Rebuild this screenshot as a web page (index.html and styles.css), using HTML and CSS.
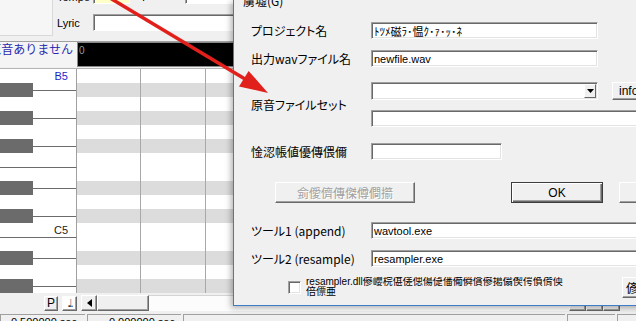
FILE: index.html
```html
<!DOCTYPE html>
<html lang="ja">
<head>
    <meta charset="UTF-8">
    <meta name="viewport" content="width=device-width, initial-scale=1.0">
    <title>UTAU - プロジェクトの設定</title>
    <link rel="stylesheet" href="styles.css">
</head>
<body>
    <div class="app">
        <div class="toolbar">
            <div class="tb-left"></div>
            <div class="tb-fields">
                <div class="tb-row tb-top">
                    <span class="tb-label">Tempo</span>
                    <span class="field yellow"></span>
                    <span class="tb-label small">:</span>
                    <span class="field short">1.0</span>
                </div>
                <div class="tb-row tb-lyric">
                    <span class="tb-label">Lyric</span>
                    <span class="field lyric"></span>
                </div>
            </div>
        </div>

        <div class="track-head">
            <div class="track-name"><span>原音ありません</span></div>
            <div class="track-bar">0</div>
        </div>

        <!-- ピアノロール -->
        <div class="roll">
            <div class="row w"><div class="key"><span class="kl blue">B5</span></div><div class="lane"></div></div>
            <div class="row b"><div class="key"><i class="bk"></i><i class="kline"></i></div><div class="lane"></div></div>
            <div class="row w"><div class="key"></div><div class="lane"></div></div>
            <div class="row b"><div class="key"><i class="bk"></i><i class="kline"></i></div><div class="lane"></div></div>
            <div class="row w"><div class="key"></div><div class="lane"></div></div>
            <div class="row b"><div class="key"><i class="bk"></i><i class="kline"></i></div><div class="lane"></div></div>
            <div class="row w"><div class="key"></div><div class="lane"></div></div>
            <div class="row w edge"><div class="key"></div><div class="lane"></div></div>
            <div class="row b"><div class="key"><i class="bk"></i><i class="kline"></i></div><div class="lane"></div></div>
            <div class="row w"><div class="key"></div><div class="lane"></div></div>
            <div class="row b"><div class="key"><i class="bk"></i><i class="kline"></i></div><div class="lane"></div></div>
            <div class="row w"><div class="key"><span class="kl">C5</span></div><div class="lane"></div></div>
            <div class="row w edge"><div class="key"></div><div class="lane"></div></div>
            <div class="row b"><div class="key"><i class="bk"></i><i class="kline"></i></div><div class="lane"></div></div>
            <div class="row w"><div class="key"></div><div class="lane"></div></div>
            <div class="row b"><div class="key"><i class="bk"></i><i class="kline"></i></div><div class="lane"></div></div>
        </div>

        <div class="scrollrow">
            <span class="sbtn">P</span>
            <span class="sbtn note">♩.</span>
            <div class="hscroll">
                <span class="sarrow">
                    <svg width="5" height="8" viewBox="0 0 5 8"><polygon points="5,0 0,4 5,8" fill="#000"/></svg>
                </span>
                <span class="thumb"></span>
                <span class="track"></span>
                <span class="mini"></span>
                <span class="mini"></span>
                <span class="mini"></span>
            </div>
        </div>

        <div class="status">
            <span class="sfield s1">0.500000 sec</span>
            <span class="sfield s2">0.000000 sec</span>
            <span class="sfield s3"></span>
            <span class="sfield s4"></span>
            <span class="sfield s5"></span>
        </div>
    </div>

    <!-- プロジェクト設定ダイアログ -->
    <div class="dialog">
        <div class="dlg-menu">虜墟(G)</div>

        <div class="frow r1">
            <span class="flabel">プロジェクト名</span>
            <input class="tbox w-mid" type="text" value="ﾄﾂﾒ磁ﾗ･愠ｸ･ｧ･ｯ･ﾈ">
        </div>
        <div class="frow r2">
            <span class="flabel">出力wavファイル名</span>
            <input class="tbox w-mid" type="text" value="newfile.wav">
        </div>
        <div class="frow r3">
            <span class="flabel">原音ファイルセット</span>
            <div class="fstack">
                <div class="combo-line">
                    <div class="combo">
                        <span class="combo-btn">
                            <svg width="7" height="4" viewBox="0 0 7 4"><polygon points="0,0 7,0 3.5,4" fill="#000"/></svg>
                        </span>
                    </div>
                    <button class="btn info">info</button>
                </div>
                <input class="tbox w-long" type="text" value="">
            </div>
        </div>
        <div class="frow r4">
            <span class="flabel">惍涊帳値優傳偎儞</span>
            <input class="tbox w-short" type="text" value="">
        </div>
        <div class="frow r5">
            <button class="btn wide" disabled>侴僾儕傳傑僔僴擶</button>
            <button class="btn ok">OK</button>
            <button class="btn cancel"></button>
        </div>
        <div class="frow r6">
            <span class="flabel">ツール1 (append)</span>
            <input class="tbox w-long" type="text" value="wavtool.exe">
        </div>
        <div class="frow r7">
            <span class="flabel">ツール2 (resample)</span>
            <input class="tbox w-long" type="text" value="resampler.exe">
        </div>
        <div class="frow r8">
            <span class="checkbox"></span>
            <span class="check-text">resampler.dll傪巊梡偡傞偲偒偼僠僃僢僋傪擖傟偰偔偩偝偄<br>倍僄亜</span>
            <button class="btn side">偐</button>
        </div>
    </div>

    <svg class="arrow" width="636" height="321" viewBox="0 0 636 321">
        <line x1="110" y1="-2" x2="245" y2="79" stroke="#e2201b" stroke-width="3.5"/>
        <polygon points="268,93 239,86.5 248.6,70.9" fill="#e2201b"/>
    </svg>
</body>
</html>
```

FILE: styles.css
```css
body {
    margin: 0;
    width: 636px;
    height: 321px;
    overflow: hidden;
    position: relative;
    background-color: #f0f0f0;
    font-family: "Liberation Sans", "Noto Sans CJK JP", sans-serif;
    font-size: 11px;
    color: #000;
}
.app {
    display: flex;
    flex-direction: column;
    height: 321px;
}

/* ツールバー */
.toolbar {
    height: 41px;
    border-bottom: 1px solid #a0a0a0;
    display: flex;
}
.tb-left {
    width: 52px;
    height: 35px;
    background-color: #f6f6f6;
    border-right: 1px solid #d9d9d9;
    border-bottom: 1px solid #d9d9d9;
}
.tb-fields {
    flex: 1;
    padding-left: 4px;
    display: flex;
    flex-direction: column;
}
.tb-row {
    display: flex;
    align-items: center;
    height: 17px;
}
.tb-top {
    margin-top: -13px;
    align-items: flex-end;
}
.tb-lyric {
    margin-top: 10px;
}
.tb-label {
    width: 36px;
    font-size: 11px;
}
.tb-top .tb-label {
    line-height: 14px;
}
.tb-label.small {
    width: 43px;
    padding-left: 12px;
}
.field {
    height: 17px;
    box-sizing: border-box;
    background-color: #fff;
    border: 1px solid;
    border-color: #a0a0a0 #fff #fff #a0a0a0;
    box-shadow: inset 1px 1px 0 #696969;
    font-size: 10px;
    text-align: right;
    padding-right: 3px;
}
.field.yellow {
    width: 37px;
    background-color: #ffffc8;
}
.field.short {
    width: 60px;
    text-align: left;
    padding-left: 38px;
}
.field.lyric {
    width: 220px;
}

/* トラックヘッダー */
.track-head {
    height: 25px;
    display: flex;
}
.track-name {
    width: 77px;
    flex-shrink: 0;
    display: flex;
    justify-content: flex-end;
    overflow: hidden;
    white-space: nowrap;
    background-color: #f4f4f4;
    padding-right: 4px;
    box-sizing: border-box;
    font-family: "Noto Sans CJK JP", sans-serif;
    font-size: 12px;
    line-height: 14px;
    color: #2a2ab0;
}
.track-bar {
    flex: 1;
    background-color: #000;
    border: 1px solid #8a8a8a;
    color: #9a9a9a;
    font-size: 10px;
    padding: 2px 0 0 1px;
}

/* ピアノロール */
.roll {
    height: 224px;
    margin-top: 1px;
    border-top: 1px solid #b4b4b4;
}
.row {
    display: flex;
    height: 14px;
}
.key {
    width: 77px;
    flex-shrink: 0;
    box-sizing: border-box;
    background-color: #fff;
    border-right: 1px solid #a0a0a0;
    display: flex;
    justify-content: flex-end;
    align-items: center;
}
.row.b .key {
    justify-content: flex-start;
    align-items: stretch;
}
.row.edge .key {
    border-top: 1px solid #6b6b6b;
}
.bk {
    width: 33px;
    background-color: #6b6b6b;
}
.kline {
    flex: 1;
    background: linear-gradient(#fff 0 7px, #6b6b6b 7px 8px, #fff 8px);
}
.kl {
    padding-right: 8px;
    font-size: 11px;
    color: #222;
}
.kl.blue {
    color: #1e1ec8;
}
.lane {
    flex: 1;
    background-color: #fff;
    background-image: linear-gradient(90deg, #a8a8a8 1px, transparent 1px);
    background-size: 65px 100%;
    background-position: 63px 0;
}
.row.b .lane {
    background-color: #dcdcdc;
}

/* スクロールバー */
.scrollrow {
    height: 20px;
    display: flex;
    align-items: center;
    padding-left: 44px;
}
.sbtn,
.sarrow,
.thumb,
.mini {
    box-sizing: border-box;
    flex-shrink: 0;
    background-color: #f0f0f0;
    border: 1px solid;
    border-color: #fff #696969 #696969 #fff;
    box-shadow: inset -1px -1px 0 #a0a0a0;
}
.sbtn {
    width: 14px;
    height: 15px;
    display: flex;
    align-items: center;
    justify-content: center;
    font-size: 12px;
}
.sbtn.note {
    width: 15px;
    margin-left: 4px;
    background-color: #fff;
    font-family: "DejaVu Sans", sans-serif;
    font-size: 11px;
    letter-spacing: -2px;
    color: #333;
}
.hscroll {
    flex: 1;
    margin-left: 4px;
    height: 16px;
    display: flex;
}
.sarrow {
    width: 16px;
    display: flex;
    align-items: center;
    justify-content: center;
}
.thumb {
    width: 52px;
}
.track {
    flex: 1;
    background-color: #fcfcfc;
    border-top: 1px solid #d4d4d4;
}
.mini {
    width: 17px;
}
.mini:last-child {
    margin-right: 16px;
}

/* ステータスバー */
.status {
    height: 8px;
    overflow: hidden;
    display: flex;
    gap: 2px;
    padding-top: 1px;
    box-sizing: border-box;
}
.sfield {
    height: 18px;
    box-sizing: border-box;
    border-top: 1px solid #a0a0a0;
    border-left: 1px solid #a0a0a0;
    text-align: right;
    font-size: 11px;
    line-height: 12px;
    padding-top: 1px;
}
.s1 {
    width: 85px;
    padding-right: 8px;
}
.s2 {
    width: 94px;
    padding-right: 6px;
}
.s3 {
    flex: 1;
}
.s4 {
    width: 48px;
}
.s5 {
    width: 19px;
}

/* ダイアログ */
.dialog {
    position: absolute;
    left: 233px;
    top: 0;
    width: 500px;
    height: 305px;
    padding-left: 17px;
    background-color: #f0f0f0;
    border-left: 1px solid #3d7cc9;
    border-bottom: 1px solid #3d7cc9;
    box-shadow: -2px 2px 6px rgba(0, 0, 0, 0.3);
}
.dlg-menu {
    height: 16px;
    margin-top: -6px;
    margin-bottom: 2px;
    margin-left: -8px;
    font-family: "Noto Sans CJK JP", sans-serif;
    font-size: 12px;
    line-height: 14px;
}
.frow {
    display: flex;
    align-items: center;
}
.frow > * {
    flex-shrink: 0;
}
.r1 { margin-top: 12px; }
.r2 { margin-top: 11px; }
.r3 { margin-top: 15px; }
.r4 { margin-top: 16px; }
.r5 { margin-top: 22px; }
.r6 { margin-top: 19px; }
.r7 { margin-top: 11px; }
.r8 { margin-top: 9px; height: 22px; }
.flabel {
    width: 120px;
    font-family: "Noto Sans CJK JP", sans-serif;
    font-size: 12px;
    line-height: 14px;
    font-feature-settings: "palt";
}
.tbox {
    height: 17px;
    box-sizing: border-box;
    margin: 0;
    padding: 0 0 0 2px;
    border: 1px solid;
    border-color: #a0a0a0 #fff #fff #a0a0a0;
    box-shadow: inset 1px 1px 0 #696969, inset -1px -1px 0 #e3e3e3;
    background-color: #fff;
    font-family: "Liberation Sans", "Noto Sans CJK JP", sans-serif;
    font-size: 11px;
    color: #000;
    outline: none;
}
.w-mid { width: 227px; }
.w-long { width: 290px; }
.w-short { width: 131px; }
.fstack {
    display: flex;
    flex-direction: column;
    gap: 10px;
}
.combo-line {
    display: flex;
    align-items: center;
    height: 18px;
}
.combo {
    width: 227px;
    height: 18px;
    flex-shrink: 0;
    box-sizing: border-box;
    border: 1px solid;
    border-color: #a0a0a0 #fff #fff #a0a0a0;
    box-shadow: inset 1px 1px 0 #696969, inset -1px -1px 0 #e3e3e3;
    background-color: #fff;
    display: flex;
    justify-content: flex-end;
    align-items: center;
    padding-right: 1px;
}
.combo-btn {
    width: 12px;
    height: 14px;
    box-sizing: border-box;
    background-color: #f0f0f0;
    border: 1px solid;
    border-color: #fff #696969 #696969 #fff;
    display: flex;
    align-items: center;
    justify-content: center;
}
.btn {
    box-sizing: border-box;
    flex-shrink: 0;
    margin: 0;
    padding: 0;
    background-color: #f0f0f0;
    border: 1px solid;
    border-color: #fff #696969 #696969 #fff;
    box-shadow: inset -1px -1px 0 #a0a0a0;
    font-family: "Liberation Sans", "Noto Sans CJK JP", sans-serif;
    font-size: 12px;
    color: #000;
}
.info {
    width: 40px;
    height: 18px;
    margin-left: 14px;
    text-align: left;
    padding-left: 6px;
}
.wide {
    width: 140px;
    height: 21px;
    margin-left: 24px;
    color: #a0a0a0;
    text-shadow: 1px 1px 0 #fff;
    font-size: 12px;
}
.ok {
    width: 92px;
    height: 21px;
    margin-left: 96px;
    border: 1px solid #3c3c3c;
    box-shadow: inset 1px 1px 0 #fff, inset -1px -1px 0 #696969, inset -2px -2px 0 #a0a0a0;
}
.cancel {
    width: 92px;
    height: 21px;
    margin-left: 16px;
}
.checkbox {
    width: 13px;
    height: 13px;
    margin-left: 37px;
    box-sizing: border-box;
    background-color: #fff;
    border: 1px solid;
    border-color: #a0a0a0 #fff #fff #a0a0a0;
    box-shadow: inset 1px 1px 0 #696969, inset -1px -1px 0 #e3e3e3;
}
.check-text {
    width: 300px;
    margin-left: 5px;
    font-size: 10px;
    line-height: 10px;
    white-space: nowrap;
    overflow: hidden;
}
.side {
    width: 40px;
    height: 21px;
    margin-left: 16px;
    text-align: left;
    padding-left: 3px;
}

.arrow {
    position: absolute;
    left: 0;
    top: 0;
    pointer-events: none;
}
```
